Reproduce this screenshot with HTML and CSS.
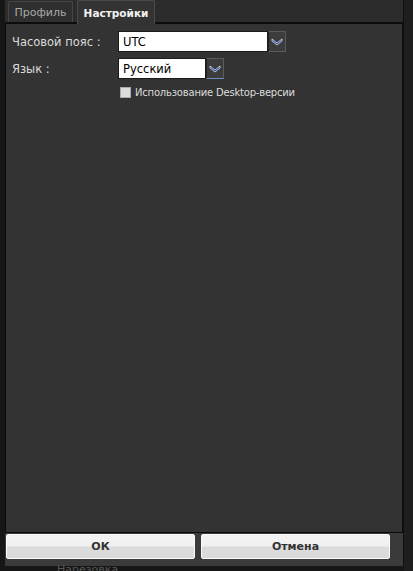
FILE: index.html
```html
<!DOCTYPE html>
<html>
<head>
<meta charset="utf-8">
<link rel="stylesheet" href="styles.css">
</head>
<body>
<div class="window">
  <div class="dialog">
    <div class="tabs">
      <div class="tab first">Профиль</div>
      <div class="tab active">Настройки</div>
    </div>
    <div class="panel">
      <div class="row">
        <span class="label">Часовой пояс :</span>
        <div class="select wide"><span class="value">UTC</span><span class="arrow"><svg width="12" height="8" viewBox="0 0 12 8"><path d="M1 1 L6 5 L11 1 L11 3 L6 7 L1 3 Z" fill="#1f3f9a" stroke="#dfe6f5" stroke-width="0.8"/></svg></span></div>
      </div>
      <div class="row">
        <span class="label">Язык :</span>
        <div class="select narrow"><span class="value">Русский</span><span class="arrow"><svg width="12" height="8" viewBox="0 0 12 8"><path d="M1 1 L6 5 L11 1 L11 3 L6 7 L1 3 Z" fill="#1f3f9a" stroke="#dfe6f5" stroke-width="0.8"/></svg></span></div>
      </div>
      <label class="check"><span class="box"></span><span>Использование Desktop-версии</span></label>
    </div>
    <div class="footer">
      <button class="btn">ОК</button>
      <button class="btn">Отмена</button>
    </div>
  </div>
  <div class="behind">Нарезовка</div>
</div>
</body>
</html>
```
FILE: styles.css
```css
* { box-sizing: border-box; }
html, body { margin: 0; padding: 0; }
body {
  width: 413px;
  height: 571px;
  overflow: hidden;
  background: #161616;
  font-family: "DejaVu Sans", Tahoma, sans-serif;
}
.window {
  position: relative;
  width: 413px;
  height: 571px;
  padding-left: 5px;
  border-right: 9px solid #1e1e1e;
  display: flex;
}
.dialog {
  width: 399px;
  height: 566px;
  display: flex;
  flex-direction: column;
  background: #3a3a3a;
  border-right: 1px solid #111;
}
.tabs {
  height: 24px;
  display: flex;
  align-items: flex-end;
  gap: 4px;
  padding-left: 3px;
  background: #2c2c2c;
  border-bottom: 2px solid #0c0c0c;
}
.tab {
  height: 21px;
  display: flex;
  align-items: center;
  justify-content: center;
  font-size: 11px;
  color: #a9a9a9;
  background: #2f2f2f;
  border: 1px solid #454545;
  border-bottom: none;
  border-radius: 2px 2px 0 0;
}
.tab.first { width: 65px; }
.tab.active {
  width: 78px;
  height: 24px;
  margin-bottom: -2px;
  color: #f2f2f2;
  font-weight: bold;
  font-size: 10.5px;
  background: #333333;
  border-color: #4a4a4a;
}
.panel {
  flex: 1;
  background: #333333;
  border: 1px solid #0a0a0a;
  border-top: none;
  padding: 7px 0 0 6px;
  display: flex;
  flex-direction: column;
  gap: 6px;
}
.row {
  display: flex;
  align-items: center;
  height: 21px;
}
.label {
  width: 106px;
  font-size: 11.5px;
  color: #dcdcdc;
}
.select {
  display: flex;
  height: 21px;
}
.select .value {
  background: #ffffff;
  color: #000;
  font-size: 11.5px;
  display: flex;
  align-items: center;
  padding-left: 4px;
  border: 1px solid #1a1a1a;
}
.select.wide .value { width: 150px; }
.select.narrow .value { width: 88px; }
.arrow {
  width: 18px;
  display: flex;
  align-items: center;
  justify-content: center;
  background: #3c3c3c;
  border: 1px solid #5a5a5a;
  border-left: 1px solid #222;
}
.select.narrow .arrow { border-bottom: 1px solid #6f8cc4; }
.check {
  display: flex;
  align-items: center;
  gap: 4px;
  margin-left: 108px;
  margin-top: 2px;
  font-size: 10px;
  letter-spacing: -0.2px;
  color: #dcdcdc;
}
.box {
  width: 11px;
  height: 11px;
  background: #dcdcdc;
  border: 1px solid #aaa;
}
.footer {
  height: 33px;
  display: flex;
  gap: 6px;
  padding: 1px 0 0 1px;
  background: #3a3a3a;
}
.btn {
  width: 189px;
  height: 25px;
  border: 1px solid #fafafa;
  border-radius: 2px;
  background: linear-gradient(#f3f3f3 0%, #f0f0f0 48%, #dcdcdc 52%, #dadada 100%);
  font-family: "DejaVu Sans", sans-serif;
  font-size: 11px;
  font-weight: bold;
  color: #333;
  padding: 0;
}
.behind {
  position: absolute;
  left: 57px;
  top: 563px;
  font-size: 11px;
  line-height: 13px;
  color: #555;
}
```
